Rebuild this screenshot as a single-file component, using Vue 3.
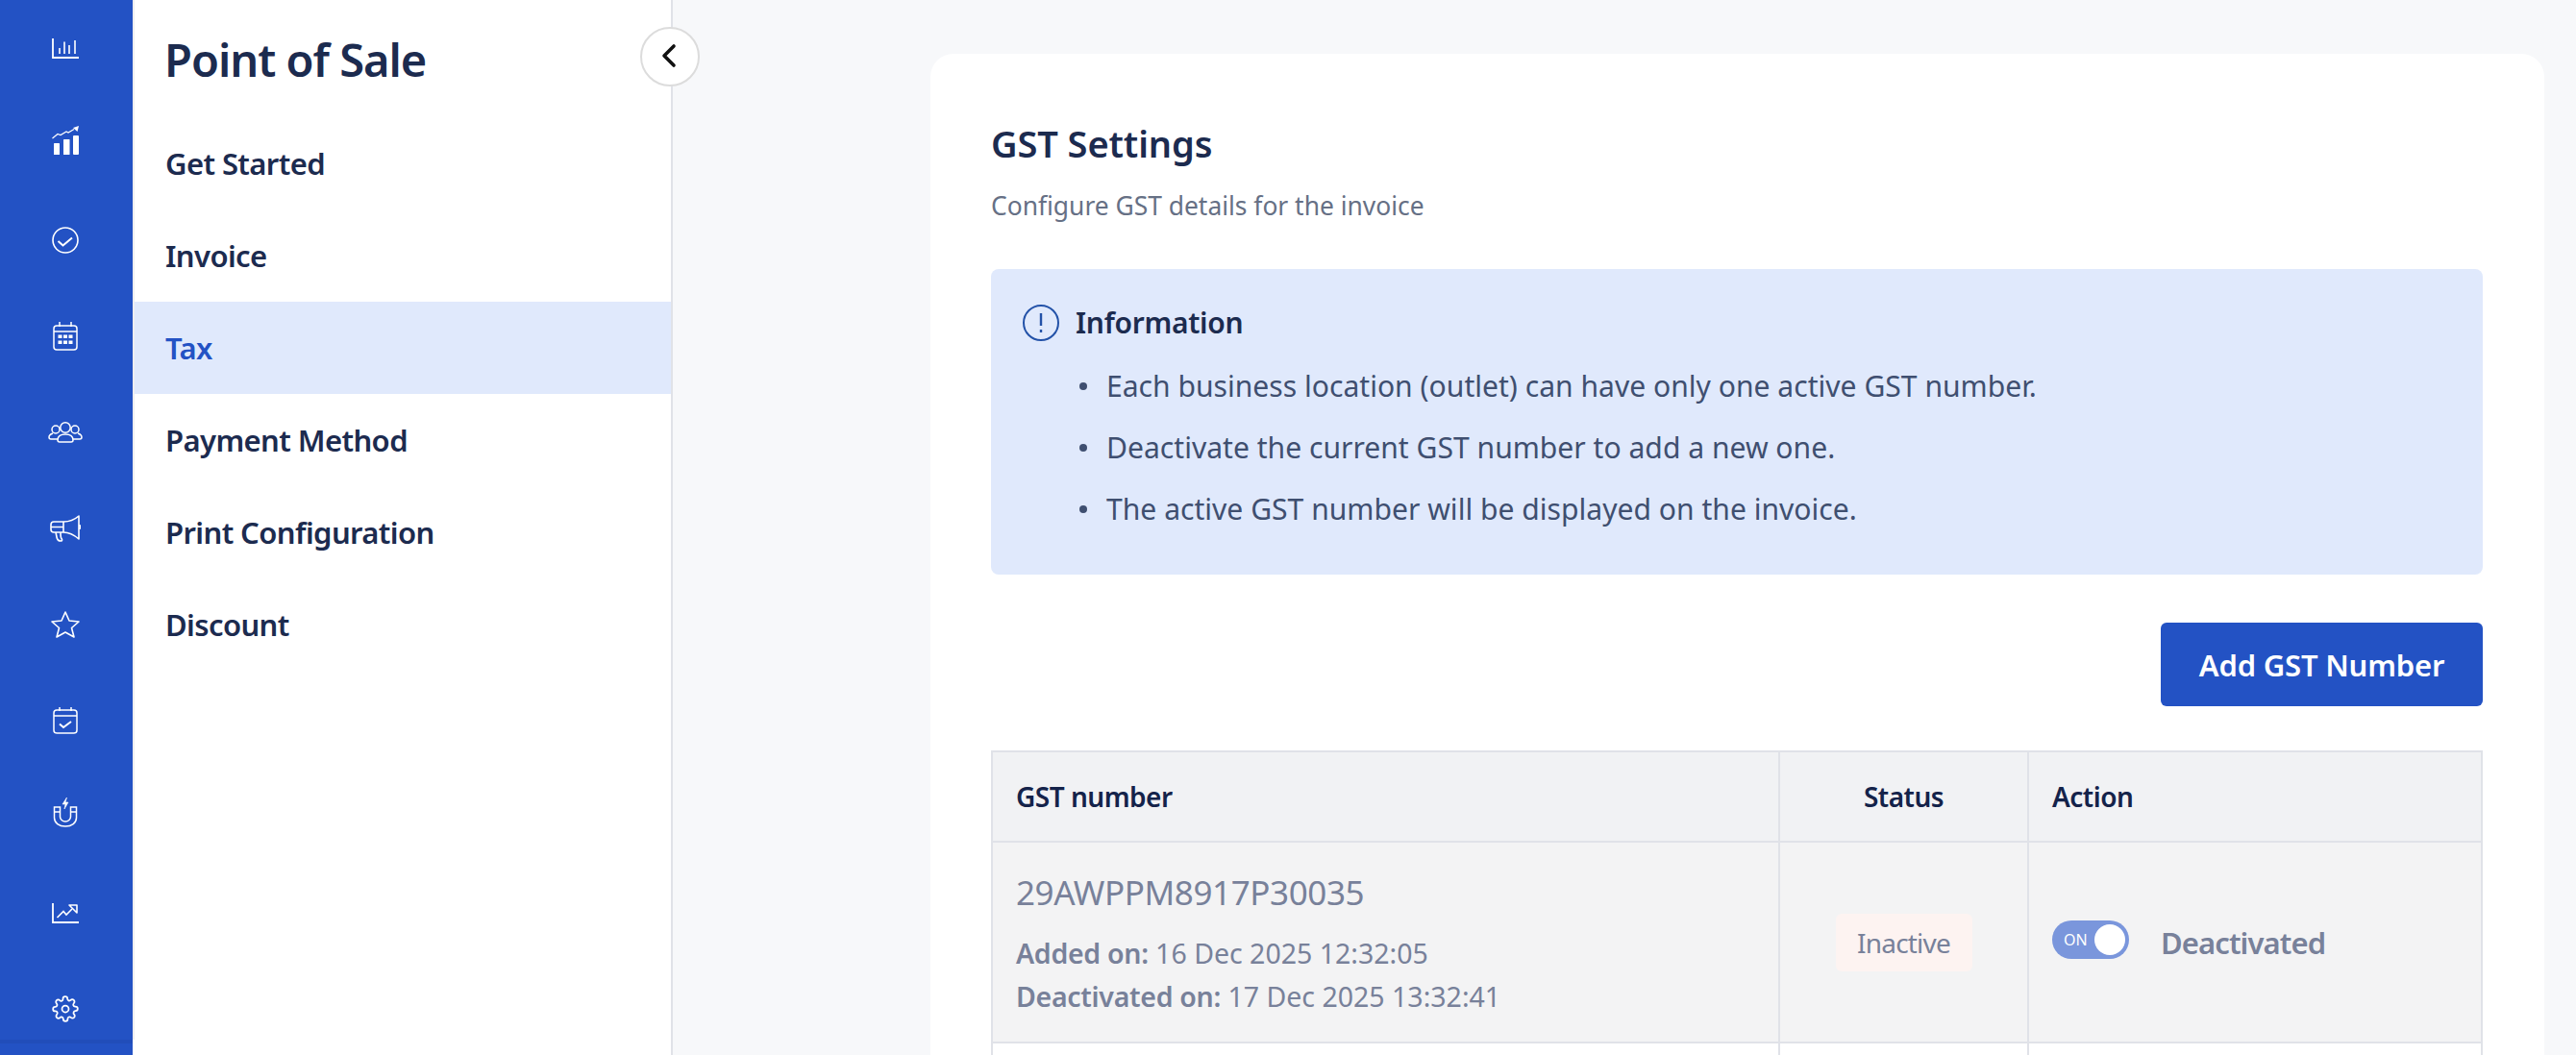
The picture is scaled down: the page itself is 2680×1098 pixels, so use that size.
<script setup>
const nav = ['Get Started', 'Invoice', 'Tax', 'Payment Method', 'Print Configuration', 'Discount']
const notes = [
  'Each business location (outlet) can have only one active GST number.',
  'Deactivate the current GST number to add a new one.',
  'The active GST number will be displayed on the invoice.'
]
</script>

<template>
  <div class="app">
    <aside class="rail">
      <div class="slot"><svg width="28" height="21" viewBox="0 0 28 21" fill="none" stroke="#fff" stroke-width="1.600"><path d="M1 0v20h27" stroke-width="1.800"/><path d="M8 10v6M13 3.500V16M18 7v9M24 2v14"/></svg></div>
      <div class="slot"><svg class="up4" width="28" height="30" viewBox="0 0 28 30"><path d="M.5 13L6 8.500l3 1L15 6l2 1 6-3.500" fill="none" stroke="#fff" stroke-width="1.200"/><path d="M22 2l6-2-1.500 6z" fill="#fff"/><rect x="2" y="18" width="6" height="12" rx=".6" fill="#fff"/><rect x="12" y="14" width="6.500" height="16" rx=".6" fill="#fff"/><rect x="22" y="10" width="6" height="20" rx="1" fill="#fff"/></svg></div>
      <div class="slot"><svg width="28" height="28" viewBox="0 0 28 28" fill="none" stroke="#fff" stroke-width="1.600"><circle cx="14" cy="14" r="13"/><path d="M6.500 15l5 4.500 9.500-8" stroke-width="2"/></svg></div>
      <div class="slot"><svg width="26" height="30" viewBox="0 0 26 30" fill="none" stroke="#fff" stroke-width="1.500"><rect x="1" y="4" width="24" height="25" rx="3"/><path d="M1 10h24M7 0v5M19 0v5"/><g fill="#fff" stroke="none"><rect x="5.500" y="13.500" width="4" height="3.500"/><rect x="11" y="13.500" width="4" height="3.500"/><rect x="16.500" y="13.500" width="4" height="3.500"/><rect x="5.500" y="19.500" width="4" height="3.500"/><rect x="11" y="19.500" width="4" height="3.500"/><rect x="16.500" y="19.500" width="4" height="3.500"/></g></svg></div>
      <div class="slot"><svg width="36" height="22" viewBox="0 0 36 22" fill="none" stroke="#fff" stroke-width="1.500"><circle cx="18" cy="6" r="5.200"/><circle cx="8" cy="8" r="4"/><circle cx="28" cy="8" r="4"/><path d="M5 12C2 13 1 14 1 16c0 1 1 2 2 2h7M31 12c3 1 4 2 4 4 0 1-1 2-2 2h-7"/><path d="M10 19c0-4 3-6 8-6s8 2 8 6c0 1-1 2-2 2H12c-1 0-2-1-2-2z"/></svg></div>
      <div class="slot"><svg width="32" height="28" viewBox="0 0 32 28" fill="none" stroke="#fff" stroke-width="1.600" stroke-linejoin="round"><path d="M14 7C20 7 26 4.500 30 1v24c-4-3.500-10-7-16-7H4a3 3 0 0 1-3-3v-5a3 3 0 0 1 3-3z"/><path d="M14 7v11M1 12.500h13M30 11h1.500v3H30M6 18l1 5c.5 3 2 4 4 4 1.500 0 2-1 1-2.500-1-1-1-3.500-1-6.500"/></svg></div>
      <div class="slot"><svg width="30" height="28" viewBox="0 0 30 28" fill="none" stroke="#fff" stroke-width="1.600" stroke-linejoin="round"><path d="M15 1l4 9 10 1-7.500 6.500L24 27l-9-5-9 5 2.500-9.500L1 11l10-1z"/></svg></div>
      <div class="slot"><svg width="26" height="28" viewBox="0 0 26 28" fill="none" stroke="#fff" stroke-width="1.500"><rect x="1" y="3" width="24" height="24" rx="3"/><path d="M1 9h24M7 0v4M19 0v4"/><path d="M7 17.500l4 3.500 8-6" stroke-width="2"/></svg></div>
      <div class="slot"><svg class="up10" width="26" height="32" viewBox="0 0 26 32" fill="none" stroke="#fff" stroke-width="1.500"><path d="M1.500 11h6v10a5.500 5 0 0 0 11 0V11h6v11c0 5.500-5 9-11.500 9S1.500 27.500 1.500 22z"/><path d="M1.500 16h6M18.500 16h6"/><path d="M14.500 1L10 8h3l-1 5 4-7h-3z" fill="#fff" stroke-width=".6"/></svg></div>
      <div class="slot"><svg width="28" height="21" viewBox="0 0 28 21" fill="none" stroke="#fff" stroke-width="1.800"><path d="M1 0v20h27"/><path d="M5.500 15l6.500-6.500L15 12l6-6" stroke-width="1.600"/><path d="M18 2h8v8z" stroke-width="1.600" stroke-linejoin="round"/></svg></div>
      <div class="slot"><svg width="28" height="28" viewBox="0 0 24 24" fill="none" stroke="#fff" stroke-width="1.500"><path d="M12 15a3 3 0 1 0 0-6 3 3 0 0 0 0 6z"/><path d="M19.400 15a1.650 1.650 0 0 0 .33 1.820l.06.06a2 2 0 1 1-2.830 2.830l-.06-.06a1.650 1.650 0 0 0-2.800 1.150V21a2 2 0 1 1-4 0v-.09a1.650 1.650 0 0 0-2.800-1.150l-.06.06a2 2 0 1 1-2.830-2.830l.06-.06a1.650 1.650 0 0 0-1.150-2.800H3a2 2 0 1 1 0-4h.09a1.650 1.650 0 0 0 1.150-2.800l-.06-.06a2 2 0 1 1 2.830-2.830l.06.06a1.650 1.650 0 0 0 2.800-1.150V3a2 2 0 1 1 4 0v.09a1.650 1.650 0 0 0 2.800 1.150l.06-.06a2 2 0 1 1 2.830 2.830l-.06.06a1.650 1.650 0 0 0 1.150 2.800H21a2 2 0 1 1 0 4h-.09a1.650 1.650 0 0 0-1.510 1z"/></svg></div>
    </aside>

    <nav class="panel">
      <h1 class="panel-title">Point of Sale</h1>
      <a v-for="item in nav" :key="item" class="nav-item" :class="{ active: item === 'Tax' }">{{ item }}</a>
      <button class="collapse"><svg width="16" height="26" viewBox="0 0 16 26" fill="none" stroke="#111" stroke-width="3.600" stroke-linecap="round" stroke-linejoin="round"><path d="M13 3L3 13l10 10"/></svg></button>
    </nav>

    <main class="main">
      <section class="card">
        <h2 class="card-title">GST Settings</h2>
        <p class="card-sub">Configure GST details for the invoice</p>

        <div class="info">
          <div class="info-head">
            <svg width="40" height="40" viewBox="0 0 40 40" fill="none" stroke="#2352a8" stroke-width="2"><circle cx="20" cy="20" r="18"/><path d="M20 10v13M20 27v3" stroke-width="2.400"/></svg>
            <span>Information</span>
          </div>
          <ul class="info-list">
            <li v-for="n in notes" :key="n">{{ n }}</li>
          </ul>
        </div>

        <div class="actions"><button class="add">Add GST Number</button></div>

        <div class="table">
          <div class="cell head">GST number</div>
          <div class="cell head center">Status</div>
          <div class="cell head">Action</div>

          <div class="cell body">
            <div class="gst">29AWPPM8917P30035</div>
            <div class="meta"><b>Added on:</b> 16 Dec 2025 12:32:05</div>
            <div class="meta"><b>Deactivated on:</b> 17 Dec 2025 13:32:41</div>
          </div>
          <div class="cell body center mid"><span class="badge">Inactive</span></div>
          <div class="cell body row">
            <span class="toggle"><span class="on">ON</span><span class="knob"></span></span>
            <span class="state">Deactivated</span>
          </div>

          <div class="cell tail"></div>
          <div class="cell tail"></div>
          <div class="cell tail"></div>
        </div>
      </section>
    </main>
  </div>
</template>

<style>
html, body { margin: 0; height: 100%; overflow: hidden; }
</style>

<style scoped>
.app { display: flex; height: 1098px; overflow: hidden; background: #f7f8fa; font-family: "Noto Sans", sans-serif; color: #1c2b4f; }
.rail { width: 138px; flex: none; position: relative; background: #2352c4; display: flex; flex-direction: column; align-items: center; padding-right: 3px; box-sizing: border-box; }
.rail::after { content: ""; position: absolute; left: 0; right: 0; top: 1082px; height: 4px; background: rgba(0, 0, 0, .05); }
.slot { height: 100px; flex: none; width: 100%; display: flex; align-items: center; justify-content: center; }
.up4 { margin-bottom: 8px; }
.up10 { margin-bottom: 10px; }
.panel { width: 560px; flex: none; position: relative; background: #fff; border-right: 2px solid #e0e2e8; }
.panel::before { content: ""; position: absolute; left: 0; top: 0; width: 2px; height: 1082px; background: #ededf0; }
.panel-title { margin: 0; height: 122px; box-sizing: border-box; padding: 30px 0 0 33px; font-size: 47px; font-weight: 600; line-height: 64px; letter-spacing: -1px; }
.nav-item { display: flex; align-items: center; height: 96px; padding-left: 34px; font-size: 31px; font-weight: 600; letter-spacing: -.6px; }
.nav-item.active { background: #e0e9fc; color: #2352c4; }
.collapse { position: absolute; top: 28px; right: -30px; width: 62px; height: 62px; padding: 0 3px 2px 0; border: 2px solid #dcdcdc; border-radius: 50%; background: #fff; display: flex; align-items: center; justify-content: center; box-sizing: border-box; }
.main { flex: 1; min-width: 0; padding: 56px 33px 0 268px; }
.card { background: #fff; border-radius: 24px 24px 0 0; padding: 67px 64px 0 63px; box-sizing: border-box; height: 1100px; }
.card-title { margin: 0; font-size: 38px; font-weight: 600; line-height: 52px; letter-spacing: -.1px; }
.card-sub { margin: 21px 0 0; font-size: 26.400px; line-height: 36px; color: #667085; }
.info { margin-top: 48px; height: 318px; box-sizing: border-box; background: #e0e9fc; border-radius: 8px; padding: 36px 32px; }
.info-head { display: flex; align-items: center; gap: 16px; font-size: 30px; font-weight: 600; line-height: 40px; letter-spacing: -.3px; }
.info-list { margin: 26px 0 0; padding: 0 0 0 60px; list-style: none; font-size: 30.100px; line-height: 40px; color: #3f4f70; }
.info-list li { display: flex; align-items: center; }
.info-list li::before { content: ""; flex: none; width: 8px; height: 8px; margin-right: 20px; border-radius: 50%; background: #3f4f70; }
.info-list li + li { margin-top: 24px; }
.actions { display: flex; justify-content: flex-end; margin-top: 50px; }
.add { width: 335px; height: 87px; border: 0; border-radius: 6px; background: #2352c4; color: #fff; font: 600 31px "Noto Sans", sans-serif; letter-spacing: -.2px; }
.table { margin-top: 46px; display: grid; grid-template-columns: 819px 259px 1fr; grid-template-rows: 94px 209px 60px; border: solid #e0e2e8; border-width: 2px 2px 0 2px; }
.cell { box-sizing: border-box; border-right: 2px solid #e0e2e8; border-bottom: 2px solid #e0e2e8; padding: 0 24px; }
.cell:nth-child(3n) { border-right: 0; }
.head { background: #f1f2f4; display: flex; align-items: center; font-size: 28px; font-weight: 600; color: #14234a; letter-spacing: -.5px; }
.head.center, .center { justify-content: center; }
.body { background: #f3f3f4; padding-top: 28px; color: #78819a; }
.mid, .row { display: flex; align-items: center; padding-top: 0; }
.gst { font-size: 35px; line-height: 48px; letter-spacing: -.4px; }
.meta { font-size: 28.500px; line-height: 45px; }
.gst + .meta { margin-top: 17px; }
.meta b { font-weight: 600; letter-spacing: -.3px; }
.badge { width: 142px; height: 60px; border-radius: 6px; background: #fdf3f1; display: flex; align-items: center; justify-content: center; font-size: 28px; letter-spacing: -.8px; }
.row { gap: 33px; }
.toggle { width: 80px; height: 40px; border-radius: 20px; background: #7a96dc; display: flex; align-items: center; justify-content: space-between; padding: 0 4px 0 12px; box-sizing: border-box; margin-top: -5px; }
.on { font-size: 16px; color: #fff; }
.knob { width: 32px; height: 32px; border-radius: 50%; background: #fff; }
.state { font-size: 31px; font-weight: 600; letter-spacing: -.9px; }
.tail { background: #fff; }
</style>
